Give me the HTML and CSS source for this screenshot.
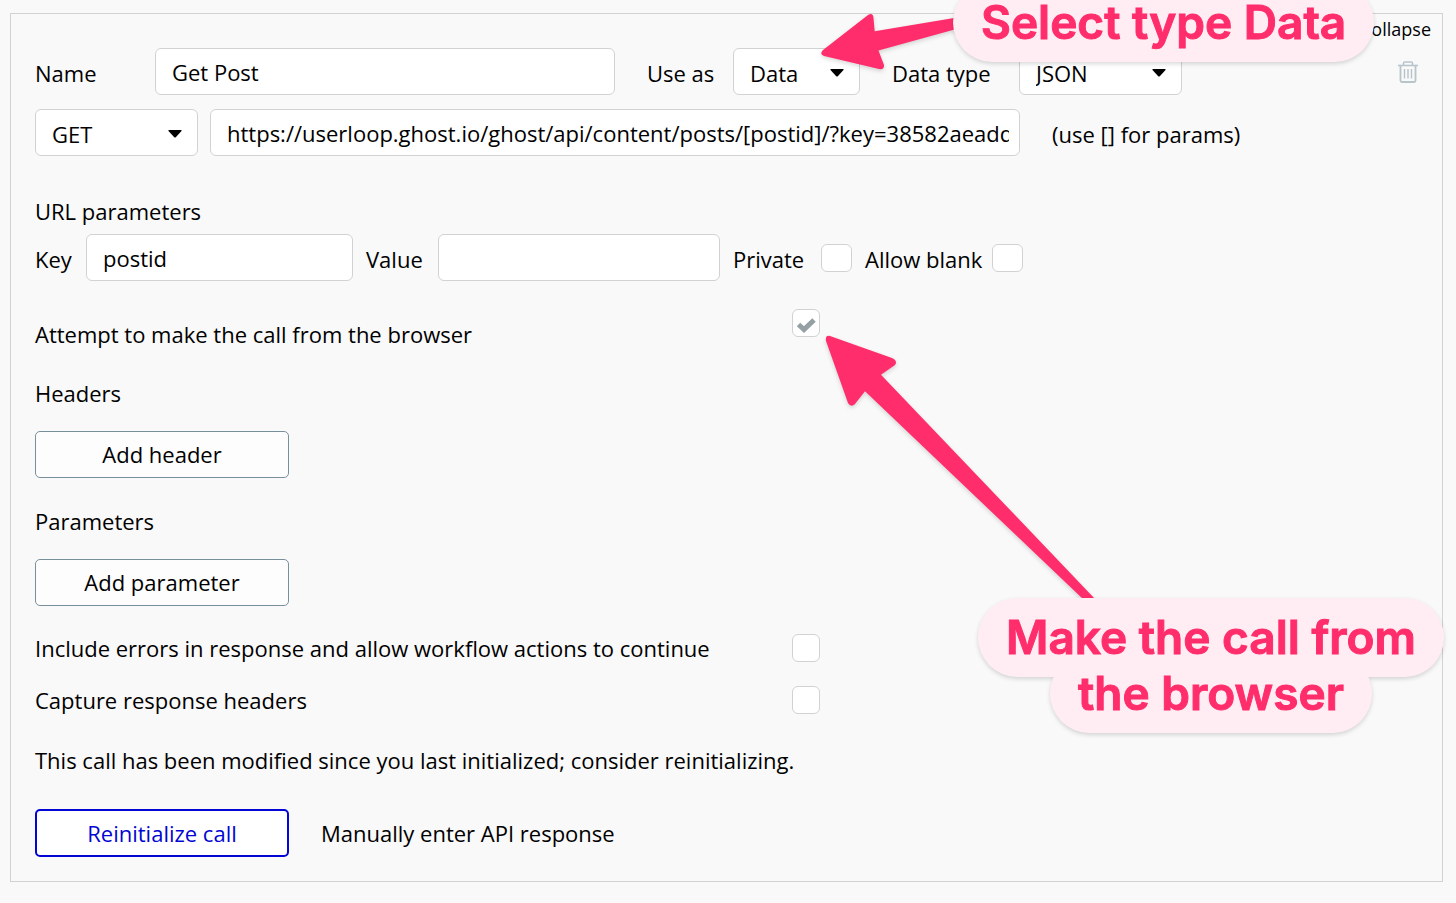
FILE: index.html
```
<!DOCTYPE html>
<html lang="en">
<head>
    <meta charset="UTF-8">
    <meta name="viewport" content="width=device-width, initial-scale=1.0">
    <title>API call settings</title>
    <link rel="stylesheet" href="styles.css">
</head>
<body>

    <main class="call">
        <div class="call__top">
            <a class="call__collapse" href="#">Collapse</a>
        </div>

        <div class="call__row call__row--main">
            <label class="label label--name" for="call-name">Name</label>
            <input class="field field--name" id="call-name" type="text" value="Get Post">
            <label class="label label--use" for="use-as">Use as</label>
            <select class="field select select--use" id="use-as">
                <option>Data</option>
                <option>Action</option>
            </select>
            <label class="label label--type" for="data-type">Data type</label>
            <select class="field select select--type" id="data-type">
                <option>JSON</option>
                <option>XML</option>
            </select>
            <button class="call__delete" type="button" aria-label="Delete call">
                <svg width="20" height="22" viewBox="0 0 20 22" fill="none" stroke="#b7c5cb">
                    <path d="M0 4.500h20" stroke-width="1.600"/>
                    <path d="M5.500 4V2.500Q5.500 1 7 1h6q1.500 0 1.500 1.500V4" stroke-width="1.600"/>
                    <path d="M2.500 5v14.500q0 1.500 1.500 1.500h12q1.500 0 1.500-1.500V5" stroke-width="1.800"/>
                    <path d="M6.500 8v9.500M10 8v9.500M13.500 8v9.500" stroke-width="1.400"/>
                </svg>
            </button>
        </div>

        <div class="call__row call__row--url">
            <select class="field select select--method" aria-label="Method">
                <option>GET</option>
                <option>POST</option>
            </select>
            <input class="field field--url" type="text" aria-label="URL" value="https://userloop.ghost.io/ghost/api/content/posts/[postid]/?key=38582aeadd">
            <span class="label label--hint">(use [] for params)</span>
        </div>

        <h2 class="call__title call__title--url">URL parameters</h2>
        <div class="call__row">
            <label class="label label--key" for="param-key">Key</label>
            <input class="field field--key" id="param-key" type="text" value="postid">
            <label class="label label--value" for="param-value">Value</label>
            <input class="field field--value" id="param-value" type="text">
            <label class="label label--private" for="param-private">Private</label>
            <input class="check check--wide" id="param-private" type="checkbox">
            <label class="label label--blank" for="param-blank">Allow blank</label>
            <input class="check check--wide" id="param-blank" type="checkbox">
        </div>

        <div class="option option--browser">
            <label class="option__label" for="from-browser">Attempt to make the call from the browser</label>
            <input class="check" id="from-browser" type="checkbox" checked>
        </div>

        <h2 class="call__title">Headers</h2>
        <button class="button" type="button">Add header</button>

        <h2 class="call__title">Parameters</h2>
        <button class="button" type="button">Add parameter</button>

        <div class="option">
            <label class="option__label" for="include-errors">Include errors in response and allow workflow actions to continue</label>
            <input class="check" id="include-errors" type="checkbox">
        </div>
        <div class="option option--capture">
            <label class="option__label" for="capture-headers">Capture response headers</label>
            <input class="check" id="capture-headers" type="checkbox">
        </div>

        <p class="call__note">This call has been modified since you last initialized; consider reinitializing.</p>

        <div class="call__actions">
            <button class="button button--primary" type="button">Reinitialize call</button>
            <a class="call__manual" href="#">Manually enter API response</a>
        </div>
    </main>

    <!-- Annotations -->
    <svg class="arrow arrow--type" width="140" height="70" viewBox="820 10 140 70">
        <path d="M823 50L868 15Q873 12 873.500 18L874.700 31.300L960 17V28L878.500 50.500L884 65Q884.500 70 879 69L824 56Q819 54 823 50Z"/>
    </svg>
    <svg class="arrow arrow--browser" width="280" height="270" viewBox="820 332 280 270">
        <path d="M830 336L892 358Q898 361 895 365L881 374.700L1096 600H1084L865 391.300L855 404Q851 408 848 403L826 341Q825 335 830 336Z"/>
    </svg>
    <div class="callout callout--type">
        <span class="callout__line">Select type Data</span>
    </div>
    <div class="callout callout--browser">
        <span class="callout__line">Make the call from</span>
        <span class="callout__line">the browser</span>
    </div>

</body>
</html>
```
FILE: styles.css
```
* {
    box-sizing: border-box;
}

body {
    margin: 0;
    padding: 13px 13px 20px 10px;
    position: relative;
    background: #f9f9f9;
    color: #000;
    font-family: "Open Sans", sans-serif;
    font-size: 22px;
    line-height: 32px;
}

input,
select,
button {
    margin: 0;
    font: inherit;
    color: inherit;
}

a {
    color: inherit;
    text-decoration: none;
}

/* Call panel */
.call {
    padding: 0 24px 24px;
    border: 1px solid #d2d2d2;
}

.call__top {
    display: flex;
    justify-content: flex-end;
    margin: 0 -13px 4px 0;
    font-size: 18px;
    line-height: 30px;
}

.call__row {
    display: flex;
    align-items: center;
}

.call__row--url {
    margin-top: 14px;
}

.call__title {
    margin: 27px 0 22px;
    font-size: 22px;
    font-weight: 400;
}

.call__title--url {
    margin: 39px 0 7px;
}

.call__delete {
    display: flex;
    margin-left: auto;
    padding: 0;
    border: none;
    background: transparent;
    cursor: pointer;
}

.call__note {
    margin: 28px 0 33px;
}

.call__actions {
    display: flex;
    align-items: center;
    gap: 32px;
}

/* Labels */
.label {
    flex: none;
    padding-top: 3px;
}

.label--name {
    width: 120px;
}

.label--use {
    width: 118px;
    padding-left: 32px;
}

.label--type {
    width: 159px;
    padding-left: 32px;
}

.label--hint {
    padding-left: 32px;
}

.label--key {
    width: 51px;
}

.label--value {
    width: 85px;
    padding-left: 13px;
}

.label--private {
    width: 101px;
    padding-left: 13px;
}

.label--blank {
    width: 140px;
    padding-left: 13px;
}

/* Text boxes and drop-downs */
.field {
    min-width: 0;
    height: 47px;
    padding: 0 3px 0 16px;
    border: 1px solid #d2d2d2;
    border-radius: 6px;
    background-color: #fff;
}

.field--name {
    flex: 0 1 460px;
}

.field--url {
    flex: 0 1 810px;
    margin-left: 12px;
    padding-right: 10px;
}

.field--key {
    flex: 0 1 267px;
}

.field--value {
    flex: 0 1 282px;
}

.select {
    flex: none;
    padding-top: 3px;
    appearance: none;
    background-image: url("data:image/svg+xml,%3Csvg xmlns='http://www.w3.org/2000/svg' width='14' height='8'%3E%3Cpath d='M1 0h12q1 0 .5 1L8 7q-1 1-2 0L.5 1Q0 0 1 0z'/%3E%3C/svg%3E");
    background-repeat: no-repeat;
    background-position: right 15px top 20px;
}

.select--use {
    width: 127px;
    background-position-x: right 16px;
}

.select--type,
.select--method {
    width: 163px;
}

/* Tick boxes */
.check {
    flex: none;
    width: 28px;
    height: 28px;
    border: 1px solid #d2d2d2;
    border-radius: 6px;
    background: #fff center no-repeat;
    appearance: none;
}

.check--wide {
    width: 31px;
}

.check:checked {
    background-image: url("data:image/svg+xml,%3Csvg xmlns='http://www.w3.org/2000/svg' width='26' height='26'%3E%3Cpath d='M5.500 14.500L11 19.500L21 10' fill='none' stroke='%2394a0a3' stroke-width='5'/%3E%3C/svg%3E");
}

.option {
    display: grid;
    grid-template-columns: minmax(0, 757px) 28px;
    align-items: center;
    margin-top: 26px;
}

.option--browser {
    align-items: start;
    margin-top: 28px;
}

.option--browser .option__label {
    padding-top: 9px;
}

.option--capture {
    margin-top: 20px;
}

/* Buttons */
.button {
    display: block;
    width: 254px;
    height: 47px;
    padding: 0 0 1px;
    border: 1px solid #78909c;
    border-radius: 5px;
    background: #fdfdfd;
    cursor: pointer;
}

.button--primary {
    height: 48px;
    border: 2px solid #0205d3;
    background: #fff;
    color: #0205d3;
}

/* Callouts */
.callout {
    position: absolute;
    display: flex;
    flex-direction: column;
    align-items: center;
    color: #ff2d6b;
    font-family: Inter, sans-serif;
    font-size: 46px;
    font-weight: 600;
    line-height: 79px;
    white-space: nowrap;
    -webkit-text-stroke: 1px #ff2d6b;
    filter: drop-shadow(0 2px 2px rgba(0, 0, 0, 0.15));
}

.callout--type {
    top: -17px;
    left: 953px;
}

.callout--browser {
    top: 598px;
    left: 978px;
}

.callout__line {
    position: relative;
    padding: 0 28px;
}

/* The pills overlap, so they are painted below the text of both lines */
.callout__line::before {
    content: "";
    position: absolute;
    inset: 0;
    z-index: -1;
    border-radius: 40px;
    background: #ffedf3;
}

.callout__line + .callout__line {
    margin-top: -23px;
}

.arrow {
    position: absolute;
    fill: #ff2d6b;
    filter: drop-shadow(0 2px 2px rgba(0, 0, 0, 0.15));
    pointer-events: none;
}

.arrow--type {
    top: 10px;
    left: 820px;
}

.arrow--browser {
    top: 332px;
    left: 820px;
}
```
